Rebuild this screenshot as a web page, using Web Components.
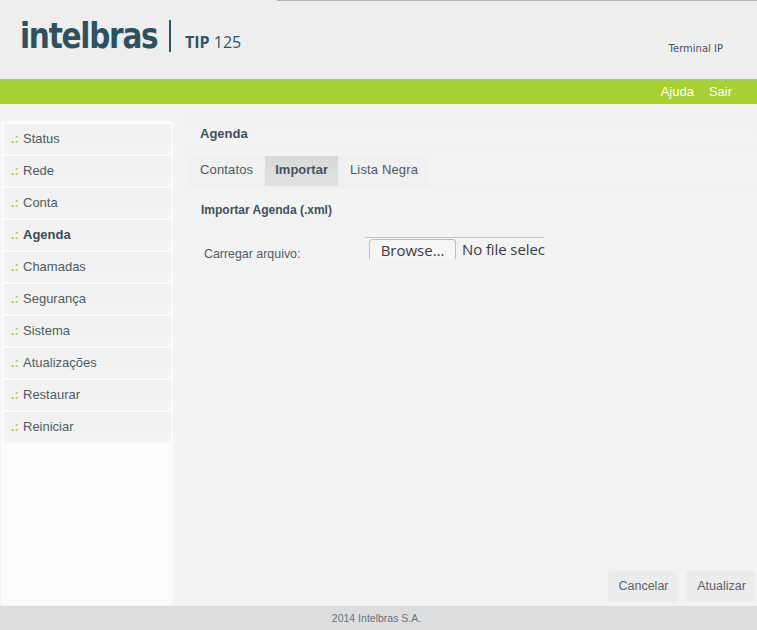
<!DOCTYPE html>
<html lang="pt">
<head>
<meta charset="utf-8">
<title>Agenda</title>
<style>
  html, body { margin: 0; height: 100%; }
  body {
    width: 757px;
    height: 630px;
    overflow: hidden;
    display: flex;
    flex-direction: column;
    font-family: "Liberation Sans", Arial, sans-serif;
    font-size: 13px;
    color: #47535c;
    background: #f3f3f3;
  }
</style>
</head>
<body>
<top-header></top-header>
<green-bar></green-bar>
<main-area>
  <side-menu>
    <menu-item>Status</menu-item>
    <menu-item>Rede</menu-item>
    <menu-item>Conta</menu-item>
    <menu-item active>Agenda</menu-item>
    <menu-item>Chamadas</menu-item>
    <menu-item>Segurança</menu-item>
    <menu-item>Sistema</menu-item>
    <menu-item>Atualizações</menu-item>
    <menu-item>Restaurar</menu-item>
    <menu-item>Reiniciar</menu-item>
  </side-menu>
  <content-pane>
    <span slot="title">Agenda</span>
    <tab-item slot="tabs" style="padding: 0 12px 3px 11px">Contatos</tab-item>
    <tab-item slot="tabs" active>Importar</tab-item>
    <tab-item slot="tabs" style="padding: 0 10px 3px 12px">Lista Negra</tab-item>
    <import-form></import-form>
    <action-button slot="actions">Cancelar</action-button>
    <action-button slot="actions">Atualizar</action-button>
  </content-pane>
</main-area>
<page-footer></page-footer>

<script>
// small helper, every element just stamps its html in an open shadow root
function makeElement(tag, html) {
  customElements.define(tag, class extends HTMLElement {
    constructor() {
      super();
      this.attachShadow({ mode: 'open' }).innerHTML = html;
    }
  });
}

makeElement('top-header', `
  <style>
    :host { display: flex; flex: none; height: 79px; background: #eeeeee; box-sizing: border-box; position: relative; }
    .topline { position: absolute; top: 0; left: 277px; right: 0; height: 1px; background: #b4b4b4; }
    .logo { display: flex; align-items: flex-start; padding: 20px 0 0 20px; flex: 1; }
    .name {
      font: 700 35px/32px "DejaVu Sans", sans-serif;
      color: #2c5261;
      letter-spacing: -1.5px;
      width: 149px;
      white-space: nowrap;
      transform: scaleX(0.845);
      transform-origin: left;
    }
    .divider { width: 2px; height: 32px; background: #2f5463; }
    .model { font: 400 16px/20px "Open Sans", sans-serif; color: #2f5463; margin: 12px 0 0 14px; }
    .model b { font-weight: 700; }
    .kind { font: 10px/12px "DejaVu Sans", sans-serif; color: #47535c; margin: 43px 34px 0 0; }
  </style>
  <div class="topline"></div>
  <div class="logo">
    <div class="name">intelbras</div>
    <div class="divider"></div>
    <div class="model"><b>TIP</b> 125</div>
  </div>
  <div class="kind">Terminal IP</div>
`);

makeElement('green-bar', `
  <style>
    :host { display: flex; flex: none; height: 25px; background: #a6d130; color: #fff; justify-content: flex-end; align-items: center; gap: 15px; padding-right: 25px; font-size: 13px; }
  </style>
  <span>Ajuda</span><span>Sair</span>
`);

makeElement('main-area', `
  <style>
    :host { display: flex; flex: 1; min-height: 0; gap: 16px; padding: 17px 2px 1px 1px; }
  </style>
  <slot></slot>
`);

makeElement('side-menu', `
  <style>
    :host { display: flex; flex-direction: column; flex: none; width: 172px; box-sizing: border-box; gap: 2px; padding: 3px 2px 0 3px; background: #fbfbfb; border-radius: 3px; }
  </style>
  <slot></slot>
`);

customElements.define('menu-item', class extends HTMLElement {
  constructor() {
    super();
    this.attachShadow({ mode: 'open' }).innerHTML = `
      <style>
        :host { display: flex; align-items: center; height: 30px; box-sizing: border-box; flex: none; padding: 0 0 2px 7px; border-radius: 2px; background: linear-gradient(#f1f1f1, #f4f4f4); color: #4f5a62; }
        :host([active]) { font-weight: 700; color: #3e4a55; }
        .dots { color: #b3ca62; font-weight: 700; width: 12px; font-size: 13px; }
      </style>
      <span class="dots">.:</span><slot></slot>
    `;
  }
});

makeElement('content-pane', `
  <style>
    :host { display: flex; flex-direction: column; flex: 1; min-width: 0; }
    .title { height: 27px; margin-top: -2px; box-sizing: border-box; padding: 6px 0 0 11px; line-height: 18px; font-weight: 700; color: #42505c; background: linear-gradient(#f1f1f1, #f5f5f5); border-bottom: 1px solid #f0f0f0; border-radius: 3px 3px 0 0; }
    .tabs { display: flex; height: 30px; margin-top: 10px; border-bottom: 2px solid #f0f0f0; }
    .body { flex: 1; min-height: 0; }
    .actions { display: flex; justify-content: flex-end; gap: 9px; margin-bottom: 3px; }
  </style>
  <div class="title"><slot name="title"></slot></div>
  <div class="tabs"><slot name="tabs"></slot></div>
  <div class="body"><slot></slot></div>
  <div class="actions"><slot name="actions"></slot></div>
`);

customElements.define('tab-item', class extends HTMLElement {
  constructor() {
    super();
    this.attachShadow({ mode: 'open' }).innerHTML = `
      <style>
        :host { display: flex; align-items: center; padding: 0 10px 3px 10px; background: #f0f0f0; color: #4f5a62; letter-spacing: 0.15px; }
        :host([active]) { background: linear-gradient(#d8d8d8, #e2e2e2); font-weight: 700; color: #47535c; letter-spacing: 0; }
      </style>
      <slot></slot>
    `;
  }
});

makeElement('import-form', `
  <style>
    :host { display: block; padding: 14px 0 0 12px; }
    h3 { margin: 0; font-size: 12px; line-height: 16px; font-weight: 700; color: #42505c; }
    .row { display: flex; margin-top: 19px; }
    label { width: 164px; padding: 9px 0 0 3px; box-sizing: border-box; font-size: 12.4px; line-height: 16px; color: #525c64; }
  </style>
  <h3>Importar Agenda (.xml)</h3>
  <div class="row">
    <label>Carregar arquivo:</label>
    <file-box></file-box>
  </div>
`);

// the file input in the shot is cut off by its box, so it is drawn by hand
makeElement('file-box', `
  <style>
    :host { display: flex; width: 179px; height: 22px; box-sizing: border-box; border-top: 1px solid #c4c4c4; padding: 1px 0 0 4px; font: 15px/20px "Open Sans", sans-serif; color: #3c3c3c; background: #f3f3f3; }
    .btn { flex: none; width: 87px; height: 20px; box-sizing: border-box; border: 1px solid #c0c0c0; border-bottom: 0; border-radius: 4px 4px 0 0; background: #f6f6f6; text-align: center; margin-right: 6px; line-height: 20px; }
    .txt { white-space: nowrap; letter-spacing: -0.1px; }
  </style>
  <div class="btn">Browse…</div>
  <div class="txt">No file selec</div>
`);

makeElement('action-button', `
  <style>
    :host { display: flex; align-items: center; justify-content: center; width: 69px; height: 31px; box-sizing: border-box; border-radius: 3px; background: #ececec; border: 1px solid #ededed; color: #5b646b; font-size: 12.5px; padding: 0 0 2px 2px; }
  </style>
  <slot></slot>
`);

makeElement('page-footer', `
  <style>
    :host { display: flex; flex: none; height: 24px; align-items: center; justify-content: center; background: #dcddde; color: #6d7377; font-size: 10.5px; padding-right: 4px; box-sizing: border-box; }
  </style>
  2014 Intelbras S.A.
`);
</script>
</body>
</html>
